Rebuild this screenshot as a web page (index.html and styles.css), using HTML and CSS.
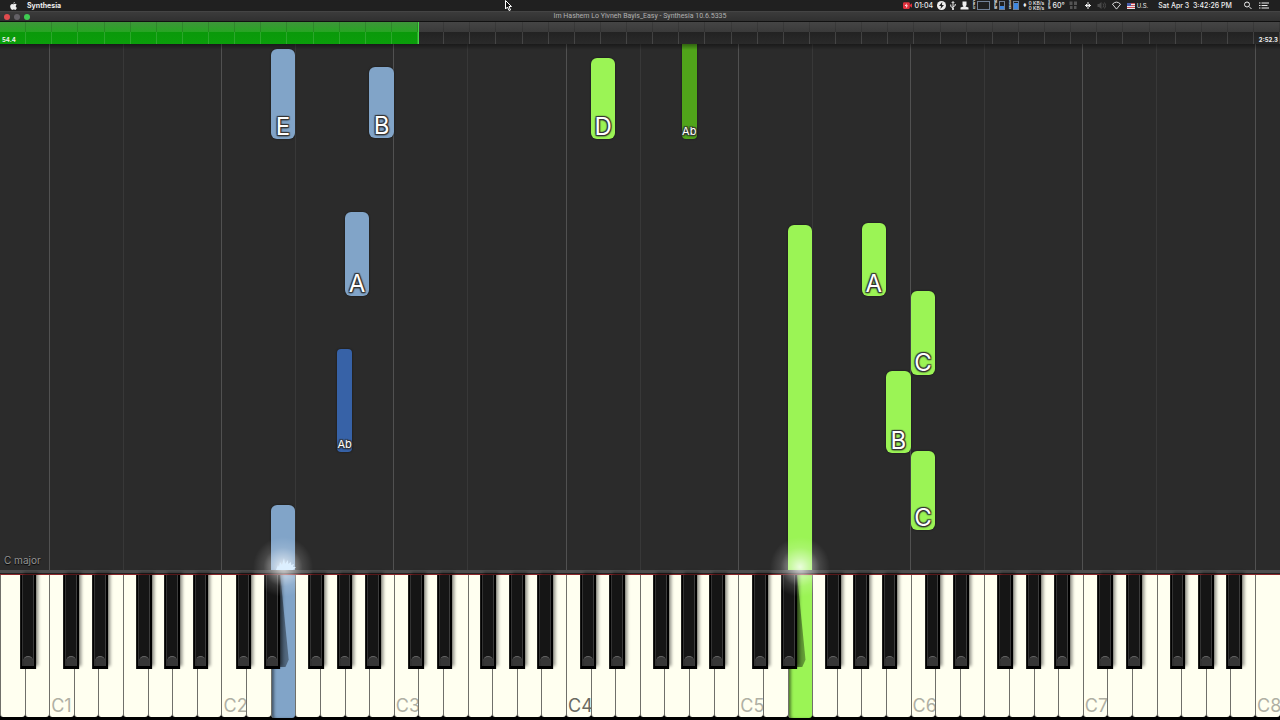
FILE: index.html
```
<!DOCTYPE html>
<html lang="en">
<head>
<meta charset="UTF-8">
<meta name="viewport" content="width=device-width,initial-scale=1">
<title>Im Hashem Lo Yivneh Bayis_Easy - Synthesia 10.6.5335</title>
<link rel="stylesheet" href="styles.css">
</head>
<body>

<header class="menubar">
  <svg class="apple" viewBox="0 0 14 16"><path d="M9.8 0c.2 1.600-1.300 3.300-2.900 3.300C6.700 1.800 8.200.2 9.800 0zM7.200 4.600c.7 0 1.600-.9 3.100-.9 1.200 0 2.300.6 3 1.600-2.700 1.600-2.200 5.200.5 6.300-.7 1.900-2 4.200-3.500 4.200-1.100 0-1.400-.7-2.900-.7s-1.900.7-2.900.7C2.500 15.800.3 12 .3 8.700c0-3.100 2-4.900 4-4.900 1.300 0 2.200.8 2.900.8z"/></svg>
  <strong class="app">Synthesia</strong>
  <div class="tray">
    <span class="item rec"><svg viewBox="0 0 16 12"><rect width="12" height="12" rx="2"/><path d="M12 5l4-3v8l-4-3z"/><path class="cut" d="M7 2L3 7h3l-1 4 4-5H6z"/></svg>01:04</span>
    <svg class="s9" viewBox="0 0 18 18"><circle cx="9" cy="9" r="9"/><path class="hole" d="M10.500 2L4 10h4l-1 6 7-8h-4z"/></svg>
    <svg class="s6" viewBox="0 0 12 18"><path class="line" d="M6 17V2M3.500 4L6 1l2.500 3M6 14L1.500 11V7M6 12l4.500-3V6"/><circle cx="6" cy="16" r="2"/></svg>
    <svg class="s9" viewBox="0 0 18 18"><path d="M5 1h8v7l-2 3 6 2v4H1v-4l6-2-2-3z"/></svg>
    <span class="stat"><i>C<br>P<br>U</i><b class="box wide"></b></span>
    <span class="stat"><i>M<br>E<br>M</i><b class="box low"></b></span>
    <span class="stat"><i>S<br>S<br>D</i><b class="box high"></b></span>
    <span class="stat"><i>▲<br>▼</i><i class="net">0 KB/s<br>0 KB/s</i></span>
    <span class="stat"><i>S<br>E<br>N</i>60°</span>
    <svg class="s9 dim" viewBox="0 0 18 18"><path d="M1 1h6v7H1zM10 1h6v7h-6zM2 10h5v6H2zM10 10h5v6h-5z"/></svg>
    <span class="item spaced">
      <svg class="s6" viewBox="0 0 12 18"><path class="line" d="M6 2v14M3 6v6M9 6v6M0 9h12"/></svg>
      <svg class="s9 faint" viewBox="0 0 18 18"><path d="M1 6h3l5-4v14l-5-4H1z"/><path class="line" d="M12 5q3 4 0 8M15 3q5 6 0 12"/></svg>
      <svg class="s9" viewBox="0 0 20 18"><path class="line" d="M1 6q9-9 18 0L10 17z"/></svg>
    </span>
    <span class="item flag"><svg viewBox="0 0 16 12"><path fill="#e8e8e8" d="M0 0h16v12H0z"/><path stroke="#cc5058" stroke-width="2" d="M0 1h16M0 5h16M0 9h16"/><path fill="#4a5fae" d="M0 0h8v6H0z"/></svg>U.S.</span>
    <time class="clock">Sat Apr 3&nbsp; 3:42:26 PM</time>
    <svg class="s9" viewBox="0 0 18 18"><circle class="line" cx="8" cy="7" r="5"/><path class="line" d="M12 11l5 5"/></svg>
    <svg class="list" viewBox="0 0 20 14"><path class="line" d="M0 2h3M5 2h15M0 7h3M5 7h12M0 12h3M5 12h15"/></svg>
  </div>
</header>

<div class="titlebar">
  <div class="lights">
    <button class="light red" aria-label="Close"></button>
    <button class="light gray" aria-label="Minimize"></button>
    <button class="light green" aria-label="Zoom"></button>
  </div>
  <span class="title">Im Hashem Lo Yivneh Bayis_Easy - Synthesia 10.6.5335</span>
</div>

<div class="timeline">
  <div class="played" id="played"></div>
  <div class="bars" id="bars"></div>
  <span>54.4</span>
  <span>2:52.3</span>
</div>

<main class="roll" id="roll">
  <div class="lanes" id="lanes"></div>
  <span class="scale">C major</span>
</main>

<div class="rail"></div>
<div class="keyboard" id="keyboard"></div>

<svg class="cursor" viewBox="0 0 14 22"><path d="M1 1v17l4-4 3 7 3-1-3-7h5z"/></svg>

<script src="script.js"></script>
</body>
</html>
```
FILE: styles.css
```
* { box-sizing:border-box; }
html,body { margin:0; padding:0; height:100%; background:#000; overflow:hidden; font-family:Inter,sans-serif; user-select:none; }
body { display:flex; flex-direction:column; }
button { padding:0; border:0; font:inherit; }
svg { display:block; flex:none; fill:#eee; }
svg .line { fill:none; stroke:#eee; stroke-width:2; }

/* mac menu bar */
.menubar { display:flex; align-items:center; height:11px; padding:0 11px 0 10px; background:#202020; color:#eee; font-size:7px; line-height:11px; white-space:nowrap; }
.apple { width:7px; height:8px; margin-right:10px; }
.app { font-weight:700; }
.tray { display:flex; align-items:center; gap:4px; margin-left:auto; }
.item { display:flex; align-items:center; gap:2px; }
.spaced { gap:6px; margin:0 2px 0 3px; }
.rec svg { width:9px; height:7px; fill:#e0303c; }
.rec .cut { fill:#fff; }
.rec { font-weight:500; }
.hole { fill:#202020; }
.s9 { width:9px; height:9px; }
.s6 { width:6px; height:9px; }
.dim { opacity:.25; }
.faint { opacity:.2; }
.stat { display:flex; align-items:center; gap:2px; height:11px; font-weight:500; }
.stat i { font-style:normal; font-size:3px; line-height:3px; font-weight:700; }
.stat .net { font-size:5px; line-height:5px; font-weight:500; }
.box { width:6px; height:9px; border:1px solid #718096; }
.box.wide { width:13px; }
.low { background:linear-gradient(#202020 60%,#3f87e0 60%); }
.high { background:linear-gradient(#202020 20%,#3f87e0 20%); }
.flag { font-size:6px; }
.flag svg { width:8px; height:6px; }
.clock { margin:0 7px 0 6px; font-weight:500; }
.list { width:10px; height:7px; margin-left:3px; }

.titlebar { display:flex; align-items:center; height:11px; padding:0 4px; background:linear-gradient(#3b3b3b,#303030); border-top:1px solid #444; border-bottom:1px solid #111; }
.lights { display:flex; flex:1; gap:4px; }
.light { width:6px; height:6px; border-radius:50%; }
.red { background:#e04b4e; }
.gray { background:#636166; }
.green { background:#3fcb52; }
.title { color:#b0b0b0; font-family:Roboto,sans-serif; font-size:7px; line-height:9px; }
.titlebar::after { content:""; flex:1; }

.timeline { position:relative; display:flex; justify-content:space-between; align-items:flex-end; height:22px; padding:0 2px; background:linear-gradient(#454545,#3a3a3a 45%,#222 45%,#2a2a2a); color:#eee; font-size:6px; font-weight:700; line-height:9px; }
.timeline span { position:relative; }
.played { position:absolute; inset:0 auto 0 0; background:linear-gradient(#3e963a,#27a523 45%,#0a990a 45%,#0b9e0b); border-right:1px solid #45d945; }
.bars { position:absolute; inset:0; display:flex; }
.bars i { flex:1; border-right:1px solid; border-image:linear-gradient(#0002 45%,#fff2 45%) 1; }

/* falling notes */
.roll { position:relative; flex:1; overflow:hidden; background:#2b2b2b; }
.roll::after { content:""; position:absolute; inset:0 0 auto 0; height:6px; background:linear-gradient(#0006,#0000); }
.lanes { display:flex; height:100%; }
.lanes i { flex:1; }
.lanes .c { border-left:1px solid #515151; }
.lanes .f { border-left:1px solid #383838; }
.note { position:absolute; display:flex; justify-content:center; align-items:flex-end; border-radius:6px; box-shadow:0 0 2px #0009; color:#fff; font-size:24px; line-height:25px;
  text-shadow:-1px -1px 1px #333,1px -1px 1px #333,-1px 1px 1px #333,1px 1px 1px #333,0 1px 2px #222; }
.note.sharp { border-radius:4px; font-size:11px; line-height:16px; }
.note.held { border-radius:6px 6px 0 0; }
.left { background:#81a4c8; }
.right { background:#9bf455; }
.left.sharp { background:#3762a7; }
.right.sharp { background:#50a41a; }
.scale { position:absolute; left:4px; bottom:2px; color:#949494; font-size:10px; line-height:15px; text-shadow:0 1px 1px #000; }

.rail { height:4px; background:linear-gradient(#4d4d4d 75%,#222 75%); }

/* piano */
.keyboard { display:flex; height:146px; background:#000; border-top:1px solid #8a2529; }
.key { position:relative; flex:1; min-width:0; padding-bottom:3px; }
.white { display:flex; align-items:flex-end; width:100%; height:100%; padding:0 0 0 1px; background:#fffff0; border-left:1px solid #70706a; border-radius:0 0 3px 3px; color:#b0b0a4; font-size:18px; line-height:22px; text-align:left; }
.white.middle { color:#6a6a62; }
.black { position:absolute; top:0; z-index:2; width:64%; height:94px; transform:translateX(-50%); background:linear-gradient(90deg,#000 12%,#333 12%,#333 18%,#151515 18%,#151515 80%,#3c3c3c 80%,#3c3c3c 88%,#000 88%); border-bottom:3px solid #000; box-shadow:3px -3px 3px #0006; }
.black::after { content:""; position:absolute; left:3px; right:3px; bottom:0; height:9px; border-radius:5px 5px 0 0; background:#363636; border-top:1px solid #666; }
.key.down { padding-bottom:2px; }
.down .white { box-shadow:inset 3px 0 3px -1px #0007; }
.down .white.left { background:#81a4c8; }
.down .white.right { background:#9bf455; }
.down::before { content:""; position:absolute; left:5px; top:0; z-index:1; width:13px; height:92px; background:linear-gradient(90deg,#0008,#0005); clip-path:polygon(0 0,35% 0,100% 92%,75% 100%,0 100%); }
.glow { position:absolute; left:50%; top:-38px; z-index:3; width:60px; height:60px; transform:translateX(-50%); background:radial-gradient(closest-side,#fffc,#fff7 30%,#fff2 65%,#fff0); pointer-events:none; }
.spark { position:absolute; left:5px; top:-17px; z-index:4; width:20px; height:12px; fill:#dcefff; }

.cursor { position:absolute; left:505px; top:0; width:7px; height:11px; fill:#111; stroke:#fff; stroke-width:2; }
```
FILE: script.js
```
const WHITE = 52, BARS = 49, ROLL = 526;
const names = ['A', 'B', 'C', 'D', 'E', 'F', 'G'];
// how far each sharp sits from the edge it straddles, in key widths
const sharps = { A: 0.15, C: -0.1, D: 0.07, F: -0.15, G: 0 };

// key, start and end are counted from the top of the roll
const notes = [
  { key: 11, top: 5, end: 95, hand: 'left', text: 'E' },
  { key: 15, top: 23, end: 94, hand: 'left', text: 'B' },
  { key: 14, top: 168, end: 252, hand: 'left', text: 'A' },
  { key: 13, top: 305, end: 408, hand: 'left', text: 'Ab', sharp: true },
  { key: 11, top: 461, end: 526, hand: 'left', held: true },
  { key: 24, top: 14, end: 95, hand: 'right', text: 'D' },
  { key: 27, top: -10, end: 95, hand: 'right', text: 'Ab', sharp: true },
  { key: 32, top: 181, end: 526, hand: 'right', held: true },
  { key: 35, top: 179, end: 252, hand: 'right', text: 'A' },
  { key: 37, top: 247, end: 331, hand: 'right', text: 'C' },
  { key: 36, top: 327, end: 409, hand: 'right', text: 'B' },
  { key: 37, top: 407, end: 486, hand: 'right', text: 'C' }
];

const keyboard = document.getElementById('keyboard');
const lanes = document.getElementById('lanes');
const roll = document.getElementById('roll');

function add(parent, tag, cls) {
  const el = document.createElement(tag);
  if (cls) el.className = cls;
  parent.appendChild(el);
  return el;
}

for (let i = 0; i < WHITE; i++) {
  const name = names[i % 7];
  const octave = Math.floor((i + 5) / 7);
  add(lanes, 'i', name === 'C' ? 'c' : name === 'F' ? 'f' : '');

  const held = notes.find(n => n.held && n.key === i);
  const key = add(keyboard, 'div', held ? 'key down' : 'key');
  const white = add(key, 'button', 'white');
  white.setAttribute('aria-label', name + octave);
  if (name === 'C') white.textContent = name + octave;
  if (name === 'C' && octave === 4) white.classList.add('middle');
  if (held) {
    white.classList.add(held.hand);
    add(key, 'div', 'glow');
    if (held.hand === 'left') key.insertAdjacentHTML('beforeend',
      '<svg class="spark" viewBox="0 0 20 12"><path d="M0 12l2-5 1 2 1-5 2 3 2-7 1 6 3-4 0 4 3-2 0 3 3-1-1 3 3 0-3 3z"/></svg>');
  }
  if (name in sharps && i < WHITE - 1) {
    const black = add(key, 'button', 'black');
    black.setAttribute('aria-label', name + '#' + octave);
    black.style.left = (1 + sharps[name]) * 100 + '%';
  }
}

notes.forEach(n => {
  const el = add(roll, 'div', 'note ' + n.hand + (n.sharp ? ' sharp' : '') + (n.held ? ' held' : ''));
  const left = n.sharp ? n.key + 0.7 : n.key;
  el.style.left = left / WHITE * 100 + '%';
  el.style.width = (n.sharp ? 0.6 : 1) / WHITE * 100 + '%';
  el.style.top = n.top / ROLL * 100 + '%';
  el.style.height = (n.end - n.top) / ROLL * 100 + '%';
  el.textContent = n.text || '';
});

const bars = document.getElementById('bars');
for (let i = 0; i < BARS; i++) add(bars, 'i');
document.getElementById('played').style.width = 419 / 1280 * 100 + '%';
```
